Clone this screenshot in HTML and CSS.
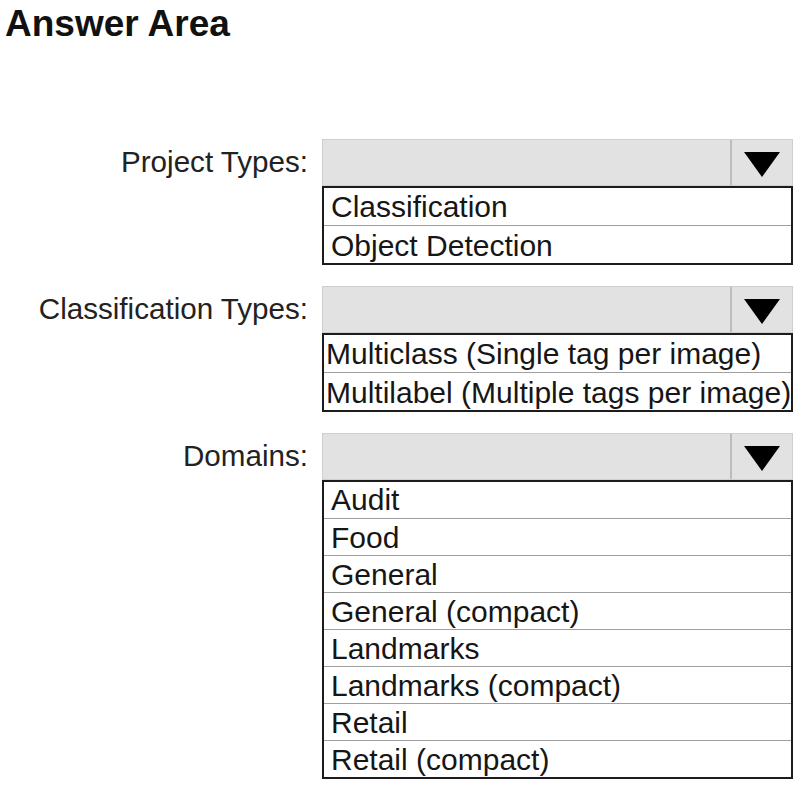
FILE: index.html
```html
<!DOCTYPE html>
<html>
<head>
<meta charset="utf-8">
<link rel="stylesheet" href="styles.css">
</head>
<body>
<h1 class="title">Answer Area</h1>
<div class="form">
  <div class="field">
    <div class="label">Project Types:</div>
    <div class="control">
      <div class="select"><div class="select-value"></div><div class="select-btn"><svg width="36" height="25" viewBox="0 0 36 25"><polygon points="0,0 36,0 18,25" fill="#000"/></svg></div></div>
      <ul class="list">
        <li>Classification</li>
        <li>Object Detection</li>
      </ul>
    </div>
  </div>
  <div class="field">
    <div class="label">Classification Types:</div>
    <div class="control">
      <div class="select"><div class="select-value"></div><div class="select-btn"><svg width="36" height="25" viewBox="0 0 36 25"><polygon points="0,0 36,0 18,25" fill="#000"/></svg></div></div>
      <ul class="list list-tight">
        <li>Multiclass (Single tag per image)</li>
        <li>Multilabel (Multiple tags per image)</li>
      </ul>
    </div>
  </div>
  <div class="field">
    <div class="label">Domains:</div>
    <div class="control">
      <div class="select"><div class="select-value"></div><div class="select-btn"><svg width="36" height="25" viewBox="0 0 36 25"><polygon points="0,0 36,0 18,25" fill="#000"/></svg></div></div>
      <ul class="list list-dense">
        <li>Audit</li>
        <li>Food</li>
        <li>General</li>
        <li>General (compact)</li>
        <li>Landmarks</li>
        <li>Landmarks (compact)</li>
        <li>Retail</li>
        <li>Retail (compact)</li>
      </ul>
    </div>
  </div>
</div>
</body>
</html>
```
FILE: styles.css
```css
* { box-sizing: border-box; }
html, body { margin: 0; padding: 0; background: #fff; }
body {
  font-family: "Liberation Sans", Arial, sans-serif;
  color: #1a1a1a;
  width: 804px;
}
.title {
  margin: 0;
  padding: 4px 0 0 5px;
  font-size: 37px;
  line-height: 40px;
  font-weight: bold;
  color: #111;
}
.form {
  display: flex;
  flex-direction: column;
  gap: 21px;
  padding-top: 95px;
}
.field {
  display: grid;
  grid-template-columns: 308px 471px;
  column-gap: 14px;
}
.label {
  text-align: right;
  font-size: 29.6px;
  height: 46px;
  line-height: 46px;
  color: #222;
  white-space: nowrap;
}
.select {
  display: flex;
  height: 47px;
  border: 1px solid #cfcfcf;
  background: #e2e2e2;
}
.select-value { flex: 1; }
.select-btn {
  width: 62px;
  border-left: 2px solid #bcbcbc;
  display: flex;
  align-items: center;
  justify-content: center;
  padding-top: 4px;
}
.list {
  list-style: none;
  margin: 0;
  padding: 0;
  border: 2px solid #1c1c1c;
}
.list li {
  height: 38px;
  line-height: 39px;
  font-size: 30px;
  padding-left: 7px;
  white-space: nowrap;
  border-top: 1px solid #a0a0a0;
  color: #161616;
}
.list li:first-child { border-top: none; height: 37px; line-height: 37px; }
.list-tight li { padding-left: 2px; }
.list-dense li { height: 37px; line-height: 37px; }
.list-dense li:first-child { height: 36px; line-height: 35px; }
```
